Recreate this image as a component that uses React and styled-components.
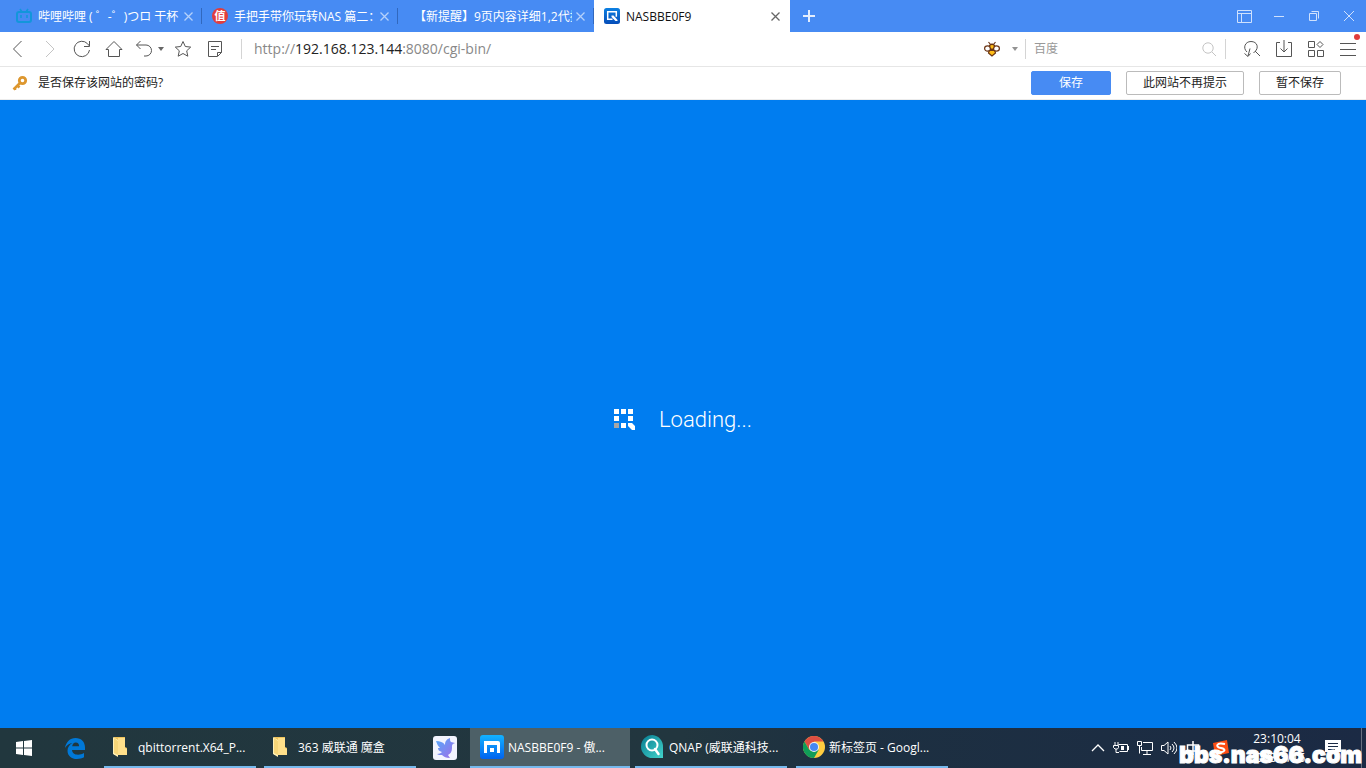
import styled, { createGlobalStyle } from "styled-components"

const GlobalStyle = createGlobalStyle`
* { box-sizing: border-box; }
html, body, #root { height: 100%; }
body {
    margin: 0;
    overflow: hidden;
    font-family: "Open Sans", "Noto Sans CJK SC", sans-serif;
    font-size: 12px;
    line-height: 16px;
}
button { font: inherit; color: inherit; padding: 0; border: none; background: none; }
svg { display: block; flex: none; }
h1 { margin: 0; }
`

const Page = styled.div`
display: flex;
flex-direction: column;
height: 100%;
`

const TabBar = styled.header`
display: flex;
height: 32px;
flex: none;
background: #478bf3;
color: #fff;
`

const Tabs = styled.nav`
display: flex;
flex: 1;
min-width: 0;
`

const Tab = styled.div`
display: flex;
align-items: center;
width: 196px;
padding: 0 ${(p) => (p.$active ? "10px" : "0")} 0 10px;
background: ${(p) => (p.$active ? "#fff" : "none")};
color: ${(p) => (p.$active ? "#111" : "#fff")};
&:first-child { width: 202px; padding-left: 16px; }
`

const TabTitle = styled.span`
flex: 1;
margin: 0 4px 0 6px;
padding-top: 2px;
overflow: hidden;
white-space: nowrap;
`

const CloseButton = styled.button`
color: ${(p) => (p.$active ? "#666" : "#b5d1fb")};
`

const TabLine = styled.span`
width: 1px;
height: 16px;
margin-left: 8px;
background: #3168be;
`

const NewTab = styled.button`
width: 38px;
display: flex;
align-items: center;
justify-content: center;
color: #e3edfd;
`

const WindowButtons = styled.div`
display: flex;
align-items: center;
gap: 19px;
padding-right: 9px;
color: #cfe1fd;
`

const Toolbar = styled.div`
display: flex;
align-items: center;
height: 35px;
flex: none;
padding: 0 9px;
background: #fff;
border-bottom: 1px solid #e6e6e6;
color: #555;
`

const ToolGroup = styled.div`
display: flex;
align-items: center;
gap: 14px;
`

const BackGroup = styled.div`
display: flex;
align-items: center;
gap: 5px;
margin: 0 -4px 0 -2px;
`

const ToolButton = styled.button`
position: relative;
color: ${(p) => (p.$dim ? "#c4c4c4" : "#555")};
`

const CaretBox = styled.span`
padding: 0 7px 0 12px;
opacity: 0.7;
`

const Divider = styled.span`
width: 1px;
height: 20px;
background: #d4d4d4;
margin: ${(p) => p.$margin || "0"};
`

const Address = styled.a`
flex: 1;
font-size: 14px;
line-height: 20px;
color: #888;
text-decoration: none;
b { font-weight: 400; color: #222; }
`

const Search = styled.input`
width: 168px;
margin: 0 0 0 8px;
padding: 0;
border: none;
outline: none;
font: inherit;
&::placeholder { color: #999; opacity: 1; }
`

const RedDot = styled.span`
position: absolute;
top: -6px;
right: -3px;
width: 6px;
height: 6px;
border-radius: 50%;
background: #e03c3c;
`

const PasswordBar = styled.div`
display: flex;
align-items: center;
gap: 15px;
height: 33px;
flex: none;
padding: 0 25px 0 12px;
background: #fff;
border-bottom: 1px solid #ececec;
color: #222;
`

const Question = styled.p`
display: flex;
align-items: center;
gap: 10px;
flex: 1;
margin: 0;
`

const BarButton = styled.button`
height: 24px;
width: ${(p) => p.$width};
border-radius: 2px;
border: 1px solid ${(p) => (p.$primary ? "#478bf3" : "#bbb")};
background: ${(p) => (p.$primary ? "#478bf3" : "#fff")};
color: ${(p) => (p.$primary ? "#fff" : "#222")};
`

const Content = styled.main`
flex: 1;
display: flex;
align-items: center;
justify-content: center;
gap: 23px;
padding-top: 12px;
background: #007df0;
color: #fff;
`

const Loading = styled.h1`
font-family: Roboto, sans-serif;
font-weight: 300;
font-size: 22px;
line-height: 28px;
`

const Taskbar = styled.footer`
position: relative;
display: flex;
height: 40px;
flex: none;
background: linear-gradient(90deg, #21373e 0%, #22363f 50%, #1d3041 62%, #1b2a44 100%);
color: #fff;
`

const IconTask = styled.button`
display: flex;
align-items: center;
justify-content: center;
width: ${(p) => p.$width};
margin-right: ${(p) => p.$after || "0"};
`

const Task = styled.button`
display: flex;
align-items: center;
gap: ${(p) => p.$gap || "4px"};
width: ${(p) => (p.$active ? "160px" : "152px")};
margin-right: ${(p) => p.$after || "0"};
padding: 0 6px 0 ${(p) => p.$left || "6px"};
background: ${(p) => (p.$active ? "#4d6067" : "none")};
border-bottom: 2px solid #76b9ed;
text-align: left;
span { padding-top: 2px; white-space: nowrap; }
`

const Tray = styled.div`
display: flex;
align-items: center;
gap: 8px;
margin-left: auto;
`

const InputMethods = styled.div`
display: flex;
align-items: center;
gap: 12px;
`

const Clock = styled.time`
width: 80px;
text-align: center;
line-height: 19px;
`

const DesktopEdge = styled.span`
align-self: stretch;
width: 5px;
margin-left: 12px;
border-left: 1px solid #667080;
`

const Watermark = styled.span`
position: absolute;
right: 4px;
bottom: 1px;
font-family: Inter, "Liberation Sans", sans-serif;
font-weight: 900;
font-size: 23px;
line-height: 24px;
-webkit-text-stroke: 1px #fff;
`

const Line = ({ w = 18, h = w, stroke = 1, children }) => (
    <svg width={w} height={h} viewBox={`0 0 ${w} ${h}`} fill="none" stroke="currentColor" strokeWidth={stroke}>
        {children}
    </svg>
)

const Cross = () => <Line w={9}><path d="M.5.5l8 8M8.5.5l-8 8" strokeWidth="1.3" /></Line>

const Caret = () => (
    <svg width="6" height="4" viewBox="0 0 6 4"><path d="M0 0h6L3 4z" fill="#666" /></svg>
)

const Folder = () => (
    <svg width="16" height="22" viewBox="0 0 16 22">
        <path d="M2 1h11v10l2 1v7H2z" fill="#edc35c" />
        <path d="M6 2h7v10l2 1v6H6z" fill="#ffe08a" />
        <path d="M1 1l5 3v17l-5-3z" fill="#fff0b5" />
        <path d="M2 2l4 3v14l-4-2z" fill="#f7d678" />
    </svg>
)

const BiliIcon = () => (
    <Line w={16} stroke="2">
        <g stroke="#1296db"><rect x="1" y="4" width="14" height="10" rx="2" /><path d="M4 1l2 3M12 1l-2 3M5 7v3M11 7v3" strokeWidth="1.6" /></g>
    </Line>
)

const ZhiIcon = () => (
    <svg width="16" height="16" viewBox="0 0 16 16">
        <circle cx="8" cy="8" r="8" fill="#e13d3d" />
        <text x="8" y="12" fontSize="11" fontWeight="700" fill="#fff" textAnchor="middle">值</text>
    </svg>
)

const QIcon = () => (
    <svg width="16" height="16" viewBox="0 0 16 16">
        <defs><linearGradient id="q" x2="0" y2="1"><stop stopColor="#0c80e2" /><stop offset="1" stopColor="#064db8" /></linearGradient></defs>
        <rect width="16" height="16" rx="2.5" fill="url(#q)" />
        <path d="M8.500 11.300H3.700V3.700h8.600v5" fill="none" stroke="#fff" strokeWidth="1.5" />
        <path d="M7.500 7.500h2l4 4.500v1h-2l-4-4z" fill="#fff" />
    </svg>
)

const Bee = () => (
    <svg width="16" height="16" viewBox="0 0 16 16" stroke="#6b3515" strokeWidth="1.2">
        <path d="M4.500 1l2 2.500M11.500 1l-2 2.500" fill="none" />
        <path d="M8 15l-3.500-3 1-3.500h5l1 3.500z" fill="#ffbd16" />
        <ellipse cx="3.600" cy="7.500" rx="3" ry="2.600" fill="#fff" />
        <ellipse cx="12.400" cy="7.500" rx="3" ry="2.600" fill="#fff" />
        <path d="M5.500 4.500Q8 2 10.500 4.500L9.500 8h-3z" fill="#ffbd16" />
        <path d="M6 9h4" strokeWidth="2" />
    </svg>
)

const KeyIcon = () => (
    <svg width="16" height="16" viewBox="0 0 16 16" stroke="#dd972f" fill="none">
        <circle cx="10.500" cy="5.500" r="3.200" strokeWidth="2.800" />
        <path d="M8.500 7.500L1.500 14.500M3 12v3M5.500 10.500l2 2" strokeWidth="2.500" />
    </svg>
)

const Edge = () => (
    <svg width="20" height="21" viewBox="0 0 20 21">
        <path d="M0 10C1 4 5 0 10.500 0 16.500 0 20 4 20 9.500V12H7c.2 3 2.600 4.700 6 4.700 2.300 0 4.300-.6 6-1.700v4.300c-2 1.100-4.300 1.700-7 1.700-5.500 0-9.500-3.300-9.500-8.300C2.500 9.300 4.500 6.500 7.500 5 4.500 5.300 1.800 7 0 10zm7.200-1.700h6.900c0-2.400-1.100-3.800-3.300-3.800-2 0-3.300 1.500-3.600 3.800z" fill="#0078d7" />
    </svg>
)

const Bird = () => (
    <svg width="24" height="24" viewBox="0 0 24 24">
        <defs><linearGradient id="b" x2="1" y2="1"><stop stopColor="#55a9fa" /><stop offset="1" stopColor="#a06be8" /></linearGradient></defs>
        <rect width="24" height="24" rx="3" fill="#f3f4fe" />
        <path d="M3 5c4 0 7 1 9 4 0-4 2-6 5-7 0 2 0 3 1 4l4 1c-3 1-3 2-3 5 0 4-2 6-4 7l2 3c-4 0-6-1-8-3-2 0-4 0-5-1 2 0 4-1 5-2-3-1-4-2-4-4l2 0C5 10 4 8 3 5z" fill="url(#b)" />
    </svg>
)

const Maxthon = () => (
    <svg width="24" height="24" viewBox="0 0 24 24">
        <defs><linearGradient id="m" x2="0" y2="1"><stop stopColor="#13b2ff" /><stop offset="1" stopColor="#0063ef" /></linearGradient></defs>
        <rect width="24" height="24" rx="3" fill="url(#m)" />
        <path d="M4 6h14q2 0 2 2v10h-3V10H7v8H4z" fill="#fff" /><path d="M10 13h4v4h-4z" fill="#fff" />
    </svg>
)

const QnapFinder = () => (
    <svg width="24" height="24" viewBox="0 0 24 24">
        <defs><linearGradient id="f" x2="1" y2="1"><stop stopColor="#077b90" /><stop offset="1" stopColor="#42d3cb" /></linearGradient></defs>
        <path d="M11.500 0a11.500 11.500 0 1 0 0 23H22V12A11.500 11.500 0 0 0 11.500 0z" fill="url(#f)" />
        <circle cx="11" cy="10" r="5.500" fill="none" stroke="#fff" strokeWidth="2" />
        <path d="M14 14l3.500 5" stroke="#fff" strokeWidth="2.500" strokeLinecap="round" />
    </svg>
)

const Chrome = () => (
    <svg width="22" height="22" viewBox="0 0 22 22">
        <circle cx="11" cy="11" r="11" fill="#ffcd40" />
        <path d="M1.470 5.500A11 11 0 0 1 20.500 5.500H11L6.200 13.700z" fill="#de4e42" />
        <path d="M1.470 5.500A11 11 0 0 0 11 22l4.800-8.300H6.200z" fill="#109d58" />
        <circle cx="11" cy="11" r="5" fill="#f1f1f1" /><circle cx="11" cy="11" r="4" fill="#4688f4" />
    </svg>
)

const tabs = [
    { title: "哔哩哔哩 ( ゜-゜)つロ 干杯", icon: <BiliIcon /> },
    { title: "手把手带你玩转NAS 篇二：威联通", icon: <ZhiIcon /> },
    { title: "【新提醒】9页内容详细1,2代播放", icon: null },
    { title: "NASBBE0F9", icon: <QIcon />, active: true },
]

function App () {
    return (
        <>
            <GlobalStyle />
            <Page>
                <TabBar>
                    <Tabs>
                        {tabs.map((tab) => (
                            <Tab key={tab.title} $active={tab.active}>
                                {tab.icon}
                                <TabTitle>{tab.title}</TabTitle>
                                <CloseButton aria-label="关闭" $active={tab.active}><Cross /></CloseButton>
                                {!tab.active && <TabLine />}
                            </Tab>
                        ))}
                        <NewTab aria-label="新标签页"><Line w={12} stroke="2"><path d="M6 0v12M0 6h12" /></Line></NewTab>
                    </Tabs>
                    <WindowButtons>
                        <button aria-label="布局"><Line w={15} h={13}><path d="M.5.5h14v12H.5zM.5 3.500h14M4.500 3.500v9" /></Line></button>
                        <button aria-label="最小化"><Line w={16}><path d="M3 8.500h10" /></Line></button>
                        <button aria-label="还原"><Line w={16}><path d="M3.500 5.500h7v7h-7zM5.500 3.500h7v7" /></Line></button>
                        <button aria-label="关闭窗口"><Line w={16}><path d="M3 3l10 10M13 3L3 13" /></Line></button>
                    </WindowButtons>
                </TabBar>
                <Toolbar>
                    <ToolGroup>
                        <ToolButton aria-label="后退"><Line><path d="M12.500 1l-8 8 8 8" /></Line></ToolButton>
                        <ToolButton aria-label="前进" $dim><Line><path d="M5 1l8 8-8 8" /></Line></ToolButton>
                        <ToolButton aria-label="刷新"><Line><path d="M16.500 10a7.700 7.700 0 1 1-2-6.300l2 2.300M16.500 1v5.500H11" /></Line></ToolButton>
                        <ToolButton aria-label="主页"><Line><path d="M1 9.500L9 1.500l8 8h-2.500v7h-11v-7z" /></Line></ToolButton>
                        <BackGroup>
                            <ToolButton aria-label="撤销"><Line><path d="M5.500 1L1.500 5l4 4M1.500 5H11a5.500 5.500 0 0 1 0 11H9" /></Line></ToolButton>
                            <Caret />
                        </BackGroup>
                        <ToolButton aria-label="收藏"><Line><path d="M9 1.500l2.300 5 5.400.6-4 3.700 1.100 5.400L9 13.500l-4.800 2.700 1.100-5.400-4-3.700 5.400-.6z" /></Line></ToolButton>
                        <ToolButton aria-label="笔记"><Line><path d="M2.500 1.500h13v11l-4 4h-9zM11.500 16v-3.500h4M5 6.500h8M5 9.500h5" /></Line></ToolButton>
                    </ToolGroup>
                    <Divider $margin="0 12px 0 17px" />
                    <Address href="http://192.168.123.144:8080/cgi-bin/">http://<b>192.168.123.144</b>:8080/cgi-bin/</Address>
                    <Bee />
                    <CaretBox><Caret /></CaretBox>
                    <Divider />
                    <Search aria-label="搜索" placeholder="百度" />
                    <ToolButton aria-label="搜索百度" $dim><Line w={14}><circle cx="6" cy="6" r="5.200" /><path d="M10 10l4 4" /></Line></ToolButton>
                    <Divider $margin="0 17px 0 9px" />
                    <ToolGroup>
                        <ToolButton aria-label="嗅探"><Line><path d="M4 12C-.5 8 2 1.500 8 1.500c6.500 0 8 6.500 4 10L10.500 13M12 11l5 5M7 8.500L5 16M1.500 13.500L5 16.500l2.500-3" /></Line></ToolButton>
                        <ToolButton aria-label="下载"><Line><path d="M5 2.500H1.500v14h15v-14H13M9 0v12M5.500 8.500L9 12l3.500-3.500" /></Line></ToolButton>
                        <ToolButton aria-label="插件"><Line><path d="M1.500 1.500h6v6h-6zM1.500 10.500h6v6h-6zM10.500 10.500h6v6h-6zM13 1.500l3 3-3 3-3-3z" /></Line></ToolButton>
                        <ToolButton aria-label="菜单"><Line><path d="M1 3.500h16M1 9.500h16M1 15.500h16" /></Line><RedDot /></ToolButton>
                    </ToolGroup>
                </Toolbar>
                <PasswordBar>
                    <Question>
                        <KeyIcon />
                        是否保存该网站的密码?
                    </Question>
                    <BarButton $primary $width="80px">保存</BarButton>
                    <BarButton $width="118px">此网站不再提示</BarButton>
                    <BarButton $width="82px">暂不保存</BarButton>
                </PasswordBar>
                <Content>
                    <svg width="22" height="22" viewBox="0 0 22 22" fill="#fff">
                        <path d="M0 0h5v5H0zM7 0h5v5H7zM14 0h5v5h-5zM0 7h5v5H0zM14 7h5v5h-5zM7 14h5v5H7zM14 14h4l3 3v4h-3l-4-4z" />
                        <path d="M0 14h5v5H0z" fill="#a6a6a6" />
                    </svg>
                    <Loading>Loading...</Loading>
                </Content>
                <Taskbar>
                    <IconTask aria-label="开始" $width="48px">
                        <svg width="16" height="16" viewBox="0 0 16 16" fill="#fff"><path d="M0 2l7-1v6.500H0zM8 1l8-1v7.500H8zM0 8.500h7V15l-7-1zM8 8.500h8V16l-8-1z" /></svg>
                    </IconTask>
                    <IconTask aria-label="Edge" $width="54px" $after="2px"><Edge /></IconTask>
                    <Task $left="8px" $gap="10px" $after="8px"><Folder /><span>qbittorrent.X64_P...</span></Task>
                    <Task $left="8px" $gap="10px" $after="4px"><Folder /><span>363 威联通 魔盒</span></Task>
                    <IconTask aria-label="迅雷" $width="50px"><Bird /></IconTask>
                    <Task $active $left="10px" $after="5px"><Maxthon /><span>NASBBE0F9 - 傲...</span></Task>
                    <Task $after="9px"><QnapFinder /><span>QNAP (威联通科技...</span></Task>
                    <Task $left="7px"><Chrome /><span>新标签页 - Googl...</span></Task>
                    <Tray>
                        <Line w={14}><path d="M1 10l6-6 6 6" strokeWidth="1.3" /></Line>
                        <Line w={16}><path d="M5.500 4.500h9v7h-8M15.500 6v4M2 2v3M5 2v3M.5 5.500h5v2l-1 1.500H2L.5 7.500zM3 9v3.500h3" /><path d="M8 6h3v4H8z" fill="currentColor" stroke="none" /></Line>
                        <Line w={16}><path d="M6 2.500h9.500v8H4.500V7M10 10.500v4M6 14.500h8M.5 1.500h4v4h-4zM2.500 5.500v8" /></Line>
                        <Line w={16}><path d="M.5 5.500H3L7 2v12l-4-3.500H.5zM9 6q2 2 0 4M11 4q4 4 0 8M13 2q6 6 0 12" /></Line>
                        <InputMethods>
                            <Line w={16}><path d="M2.500 5h11v6h-11zM8 1v14" strokeWidth="1.5" /></Line>
                            <svg width="16" height="16" viewBox="0 0 16 16"><path d="M0 3L14 0l2 13-14 3z" fill="#ff4d13" /><path d="M12 4C3 2 2 7 8 8s4 5-4 4" fill="none" stroke="#fff" strokeWidth="2" /></svg>
                        </InputMethods>
                        <Clock>23:10:04<br />2018/5/15</Clock>
                        <svg width="16" height="16" viewBox="0 0 16 16"><path d="M0 0h16v12h-3v4l-4-4H0z" fill="#fff" /><path d="M3 3.500h10M3 6.500h10M3 9.500h7" stroke="#1b2a44" /></svg>
                        <DesktopEdge />
                    </Tray>
                    <Watermark>bbs.nas66.com</Watermark>
                </Taskbar>
            </Page>
        </>
    )
}

export default App
